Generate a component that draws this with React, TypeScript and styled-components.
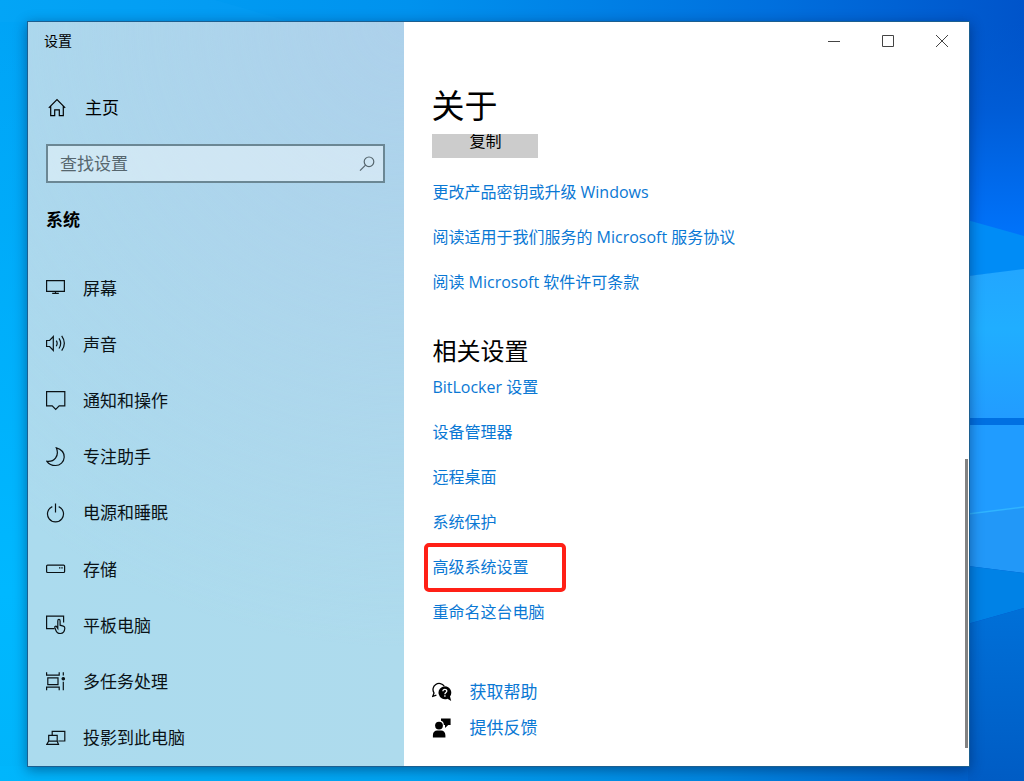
import React from "react";
import styled, { createGlobalStyle } from "styled-components";

const GlobalStyle = createGlobalStyle`
  *, *::before, *::after { box-sizing: border-box; }
  body {
    margin: 0;
    color: #000;
    font-family: "Open Sans", "Noto Sans CJK SC", sans-serif;
    font-size: 17px;
    line-height: 25px;
  }
  h1, h2, ul { margin: 0; padding: 0; font-weight: 400; list-style: none; }
  button, input { font: inherit; color: inherit; }
`;

const Desktop = styled.div`
  position: relative;
  display: flex;
  min-height: 100vh;
  padding: 21px 54px 14px 27px;
  background: #0096ec;
`;

const WallpaperArt = styled.svg`
  position: absolute;
  inset: 0;
  width: 100%;
  height: 100%;
`;

const Window = styled.div`
  position: relative;
  flex: 1;
  display: flex;
  border: 1px solid #1c5f90;
  background: #fff;
  box-shadow: 0 3px 12px rgba(0, 20, 60, 0.45);
`;

const Sidebar = styled.aside`
  flex: 0 0 40%;
  display: flex;
  flex-direction: column;
  background:
    radial-gradient(circle at 100% 0, #add1eb 0, rgba(173, 209, 235, 0) 75%),
    linear-gradient(90deg, #abdbee, #aedbed);
`;

const Title = styled.div`
  padding: 6px 16px 0;
  font-size: 14px;
`;

const HomeLink = styled.a`
  display: flex;
  align-items: center;
  gap: 18px;
  margin-top: 42px;
  padding: 0 19px;
  color: inherit;
  text-decoration: none;
`;

const SearchBox = styled.label`
  display: flex;
  align-items: center;
  height: 39px;
  margin: 24px 19px 0 18px;
  padding: 0 7px 0 12px;
  border: 2px solid #6b8794;
  background: rgba(255, 255, 255, 0.42);
  color: #56666e;
`;

const SearchInput = styled.input`
  flex: 1;
  min-width: 0;
  padding: 0;
  border: 0;
  outline: 0;
  background: transparent;
  &::placeholder { color: #56666e; opacity: 1; }
`;

const SectionTitle = styled.h2`
  margin: 24px 18px 28px;
  font-size: 17px;
  font-weight: 700;
`;

const NavList = styled.ul`
  flex: 1;
  display: grid;
  grid-auto-rows: minmax(48px, 1fr);
`;

const NavLink = styled.a`
  display: flex;
  align-items: center;
  gap: 17px;
  height: 100%;
  padding: 0 18px;
  color: #0a1216;
  text-decoration: none;
`;

const Main = styled.main`
  flex: 1;
  min-width: 0;
  display: flex;
  flex-direction: column;
`;

const Caption = styled.div`
  display: flex;
  justify-content: flex-end;
`;

const CaptionButton = styled.button`
  display: grid;
  place-items: center;
  width: 54px;
  height: 38px;
  padding: 0;
  border: 0;
  background: transparent;
  color: #444;
`;

const PageTitle = styled.h1`
  padding: 24px 27px 6px;
  font-size: 33px;
  line-height: 44px;
`;

const Body = styled.div`
  flex: 1;
  display: flex;
  overflow: hidden;
`;

const Content = styled.div`
  flex: 1;
  min-width: 0;
  padding: 0 28px 24px;
`;

const CopyButton = styled.button`
  display: block;
  width: 106px;
  height: 34px;
  margin-top: -10px;
  padding: 0;
  border: 0;
  background: #ccc;
  font-size: 16px;
`;

const Links = styled.ul`
  display: grid;
  justify-items: start;
  gap: 20px;
`;

const ProductLinks = styled(Links)`
  margin-top: 22px;
`;

const Item = styled.li<{ $marked?: boolean }>`
  position: relative;
  font-size: 16px;
  ${({ $marked }) => $marked && `
    &::after {
      content: "";
      position: absolute;
      inset: -12px -38px -12px -8px;
      border: 4px solid #ff2016;
      border-radius: 5px;
      pointer-events: none;
    }
  `}
`;

const TextLink = styled.a`
  color: #0a78d4;
  text-decoration: none;
`;

const Heading = styled.h2`
  margin: 40px 0 8px;
  font-size: 24px;
  line-height: 32px;
`;

const HelpLinks = styled.ul`
  display: grid;
  gap: 11px;
  margin-top: 54px;
`;

const HelpItem = styled.li`
  display: flex;
  align-items: center;
  gap: 17px;
`;

const Track = styled.div`
  display: flex;
  flex: 0 0 4px;
  padding-bottom: 18px;
  align-items: flex-end;
`;

const Thumb = styled.div`
  width: 3px;
  height: 47%;
  background: #828282;
`;

const Glyph = ({ children, size = 20 }: { children: React.ReactNode; size?: number }) => (
  <svg width={size} height={size} viewBox={`0 0 ${size} ${size}`} fill="none" stroke="currentColor" strokeWidth="1.2" aria-hidden="true">
    {children}
  </svg>
);

const nav: { label: string; icon: React.ReactNode }[] = [
  { label: "屏幕", icon: <path d="M.6 2.600h17.800v10.800H.6zM9.500 13.400v1.800M6.200 15.400h6.600" /> },
  { label: "声音", icon: <path d="M.6 6.500h3L7.300 2.600v13.800L3.600 12.500h-3zM10.300 6.600q1.700 2.700 0 5.600M13 4.300q3.400 5 0 10.200M15.700 1.900q5.300 7.400 0 14.800" /> },
  { label: "通知和操作", icon: <path d="M.6.6h18.200v14.200h-5.600l-3.500 3.700-3.500-3.700H.6z" /> },
  { label: "专注助手", icon: <path d="M10.300.8c5 1.300 8 5 7.900 9.500-.2 4.700-4 8.200-8.600 8.200-3.800 0-6.800-1.400-8.700-4.200 4 .4 6.700-.6 8.600-3.200 2.200-2.900 2.400-6.600.8-10.300z" /> },
  { label: "电源和睡眠", icon: <path d="M9.500.6v9M6.300 3.600a8 8 0 1 0 6.400 0" /> },
  { label: "存储", icon: <><rect x=".6" y="6.100" width="18" height="7.400" rx="1" /><path d="M13 8.800h1.400M15.300 8.800h1.400" /></> },
  { label: "平板电脑", icon: <><path d="M8.600 13.600H.6V1.100h17v6.500" /><path d="M11.800 13.400V5.900c0-2 2.300-2 2.300 0v4.300l3.200.9c1.200.4 1.600 1 1.500 2.200-.2 3.300-1.600 5.200-4.400 5.200-2.500 0-3.900-1.200-4.600-3.300l-1-2.800c-.3-1.300 1.400-1.600 2-.5z" /></> },
  { label: "多任务处理", icon: <><path d="M.6.200v3h12.600v-3M.6 18.200v-3h12.600v3M1.800 5.800H12v6.900H1.800zM17.300.200v3.400M17.300 9.700v8.500" /><circle cx="17.300" cy="6.700" r="1.200" fill="currentColor" /></> },
  { label: "投影到此电脑", icon: <path d="M6.200 7V3.300h12.600V13h-6.500M2.700 7.400h8.500v5.800H2.700zM2.600 13.300.8 16.400h11.700l-1.300-3.100" /> },
];

const productLinks = ["更改产品密钥或升级 Windows", "阅读适用于我们服务的 Microsoft 服务协议", "阅读 Microsoft 软件许可条款"];

const relatedLinks = [
  { label: "BitLocker 设置" },
  { label: "设备管理器" },
  { label: "远程桌面" },
  { label: "系统保护" },
  { label: "高级系统设置", marked: true },
  { label: "重命名这台电脑" },
];

const Wallpaper = () => (
  <WallpaperArt viewBox="0 0 1024 781" preserveAspectRatio="none" aria-hidden="true">
    <defs>
      <linearGradient id="sky" x1="0" x2="1" y1="0" y2="0">
        <stop offset="0" stopColor="#00a4f6" />
        <stop offset="0.4" stopColor="#0092ee" />
        <stop offset="0.75" stopColor="#0070de" />
        <stop offset="1" stopColor="#0054ca" />
      </linearGradient>
      <linearGradient id="glow" x1="0" x2="0" y1="0" y2="1">
        <stop offset="0" stopColor="#00b8ff" stopOpacity="0" />
        <stop offset="0.75" stopColor="#00b8ff" stopOpacity="1" />
        <stop offset="1" stopColor="#00b4fa" stopOpacity="1" />
      </linearGradient>
      <linearGradient id="ground" x1="0" x2="1" y1="0" y2="0">
        <stop offset="0" stopColor="#00b6fc" />
        <stop offset="0.4" stopColor="#00a4f2" />
        <stop offset="0.7" stopColor="#0086e0" />
        <stop offset="0.93" stopColor="#0062cc" />
        <stop offset="1" stopColor="#005cc4" />
      </linearGradient>
      <linearGradient id="edge" x1="0" x2="0" y1="0" y2="1">
        <stop offset="0" stopColor="#0058d0" stopOpacity="0" />
        <stop offset="0.4" stopColor="#005cd6" />
        <stop offset="1" stopColor="#0074fc" />
      </linearGradient>
      <linearGradient id="pane" x1="0" x2="0" y1="0" y2="1">
        <stop offset="0" stopColor="#22a6ff" />
        <stop offset="0.4" stopColor="#20aeff" />
        <stop offset="1" stopColor="#229cff" />
      </linearGradient>
      <linearGradient id="floor" x1="0" x2="0" y1="0" y2="1">
        <stop offset="0" stopColor="#0070d8" />
        <stop offset="1" stopColor="#005cc4" />
      </linearGradient>
    </defs>
    <rect width="1024" height="781" fill="url(#sky)" />
    <path d="M0 22h100v759H0z" fill="url(#glow)" />
    <path d="M0 766h1024v15H0z" fill="url(#ground)" />
    <path d="M0 0H215L292 22H0z" fill="#20b4ff" opacity="0.08" />
    <path d="M960 22h64v218h-64z" fill="url(#edge)" />
    <path d="M960 218 1024 236V270L960 277z" fill="#008cf6" />
    <path d="M960 277 1024 269V418H960z" fill="url(#pane)" />
    <path d="M960 418h64v7h-64z" fill="#0070e2" />
    <path d="M960 425h64v82l-64 8z" fill="#209cff" />
    <path d="M960 515 1024 507V573L960 565z" fill="#2298f8" />
    <path d="M960 515 1024 507" stroke="#30b4ff" strokeWidth="1.500" />
    <path d="M960 565 1024 573V608L960 626z" fill="#0082e6" />
    <path d="M968 624 1024 608V781H968z" fill="url(#floor)" />
  </WallpaperArt>
);

export default function App() {
  return (
    <>
      <GlobalStyle />
      <Desktop>
        <Wallpaper />
        <Window>
          <Sidebar>
            <Title>设置</Title>
            <HomeLink href="#home">
              <Glyph>
                <path d="M1.800 9.900 10 1.700l8.200 8.200M3.700 8.300v9.300h4v-5.800h4.600v5.800h4V8.300" />
              </Glyph>
              主页
            </HomeLink>
            <SearchBox>
              <SearchInput type="text" placeholder="查找设置" aria-label="查找设置" />
              <Glyph size={18}>
                <circle cx="11" cy="6.800" r="4.800" />
                <path d="M7.500 10.200 2 15.700" />
              </Glyph>
            </SearchBox>
            <SectionTitle>系统</SectionTitle>
            <NavList>
              {nav.map(({ label, icon }) => (
                <li key={label}>
                  <NavLink href="#nav">
                    <Glyph>{icon}</Glyph>
                    {label}
                  </NavLink>
                </li>
              ))}
            </NavList>
          </Sidebar>
          <Main>
            <Caption>
              <CaptionButton aria-label="最小化">
                <Glyph size={12}><path d="M0 6.500h12" strokeWidth="1" /></Glyph>
              </CaptionButton>
              <CaptionButton aria-label="最大化">
                <Glyph size={12}><path d="M.5.5h11v11H.5z" strokeWidth="1" /></Glyph>
              </CaptionButton>
              <CaptionButton aria-label="关闭">
                <Glyph size={12}><path d="m0 0 12 12M12 0 0 12" strokeWidth="1" /></Glyph>
              </CaptionButton>
            </Caption>
            <PageTitle>关于</PageTitle>
            <Body>
              <Content>
                <CopyButton>复制</CopyButton>
                <ProductLinks>
                  {productLinks.map((label) => (
                    <Item key={label}><TextLink href="#product">{label}</TextLink></Item>
                  ))}
                </ProductLinks>
                <Heading>相关设置</Heading>
                <Links>
                  {relatedLinks.map(({ label, marked }) => (
                    <Item key={label} $marked={marked}><TextLink href="#related">{label}</TextLink></Item>
                  ))}
                </Links>
                <HelpLinks>
                  <HelpItem>
                    <Glyph>
                      <path d="M2 10.900A5.900 5.900 0 1 1 12.200 4.200M2.200 10.600.8 14.300l3.600-1.200" strokeWidth="1.300" />
                      <path d="M12.800 4.200a6.500 6.500 0 1 0 2.700 12.500l3.700 2.200-1.200-4.400A6.500 6.500 0 0 0 12.800 4.200z" fill="currentColor" stroke="none" />
                      <path d="M10.900 9.200c0-2.600 3.900-2.500 3.900-.1 0 1.500-1.900 1.500-1.900 3.200M12.900 13.300v1.500" stroke="#fff" strokeWidth="1.300" />
                    </Glyph>
                    <TextLink href="#help">获取帮助</TextLink>
                  </HelpItem>
                  <HelpItem>
                    <Glyph>
                      <g fill="currentColor" stroke="none">
                        <circle cx="7" cy="7.600" r="3.900" />
                        <path d="M.9 19.400v-2.200c0-3 2-4.600 4.200-4.600h4c2.400 0 4.300 1.700 4.300 4.600v2.200zM9 .6h9.600v6.300h-2.400l-3.200 3v-3h-1.200C12 4.600 10.800 3.200 9 2.700z" />
                      </g>
                    </Glyph>
                    <TextLink href="#feedback">提供反馈</TextLink>
                  </HelpItem>
                </HelpLinks>
              </Content>
              <Track><Thumb /></Track>
            </Body>
          </Main>
        </Window>
      </Desktop>
    </>
  );
}
